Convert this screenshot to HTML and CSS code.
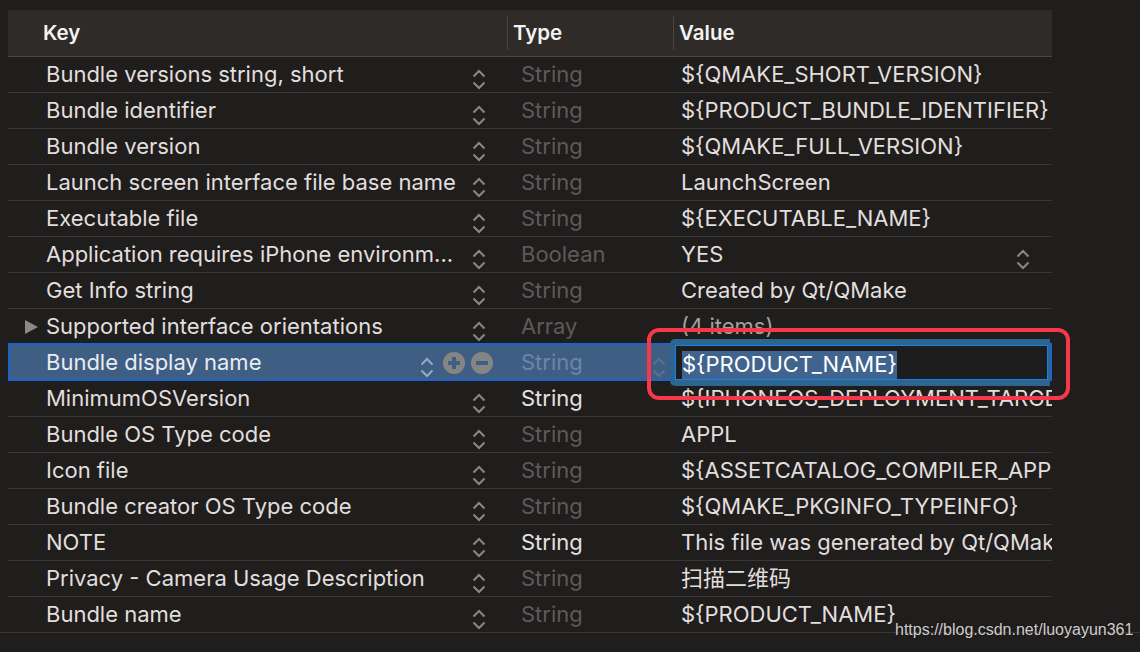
FILE: index.html
```html
<!DOCTYPE html>
<html lang="zh-CN">
<head>
  <meta charset="UTF-8">
  <title>Info.plist</title>
  <link rel="stylesheet" href="styles.css">
</head>
<body>
  <div class="plist">
    <div class="head">
      <div class="hcol hkey">Key</div>
      <div class="hcol htype">Type</div>
      <div class="hcol hvalue">Value</div>
    </div>

    <div class="row">
      <div class="key"><span class="disc"></span><span class="name">Bundle versions string, short</span><span class="stepper"></span></div>
      <div class="type">String</div>
      <div class="value">${QMAKE_SHORT_VERSION}</div>
    </div>
    <div class="row">
      <div class="key"><span class="disc"></span><span class="name">Bundle identifier</span><span class="stepper"></span></div>
      <div class="type">String</div>
      <div class="value">${PRODUCT_BUNDLE_IDENTIFIER}</div>
    </div>
    <div class="row">
      <div class="key"><span class="disc"></span><span class="name">Bundle version</span><span class="stepper"></span></div>
      <div class="type">String</div>
      <div class="value">${QMAKE_FULL_VERSION}</div>
    </div>
    <div class="row">
      <div class="key"><span class="disc"></span><span class="name">Launch screen interface file base name</span><span class="stepper"></span></div>
      <div class="type">String</div>
      <div class="value">LaunchScreen</div>
    </div>
    <div class="row">
      <div class="key"><span class="disc"></span><span class="name">Executable file</span><span class="stepper"></span></div>
      <div class="type">String</div>
      <div class="value">${EXECUTABLE_NAME}</div>
    </div>
    <div class="row">
      <div class="key"><span class="disc"></span><span class="name">Application requires iPhone environm...</span><span class="stepper"></span></div>
      <div class="type">Boolean</div>
      <div class="value value-pop"><span class="vtext">YES</span><span class="stepper"></span></div>
    </div>
    <div class="row">
      <div class="key"><span class="disc"></span><span class="name">Get Info string</span><span class="stepper"></span></div>
      <div class="type">String</div>
      <div class="value">Created by Qt/QMake</div>
    </div>
    <div class="row">
      <div class="key"><span class="disc open"></span><span class="name">Supported interface orientations</span><span class="stepper"></span></div>
      <div class="type">Array</div>
      <div class="value muted">(4 items)</div>
    </div>
    <div class="row selected">
      <div class="key"><span class="disc"></span><span class="name">Bundle display name</span><span class="stepper"></span><span class="circle plus"></span><span class="circle minus"></span></div>
      <div class="type"><span class="tname">String</span><span class="stepper faint"></span></div>
      <div class="value">
        <div class="ring"><div class="field"><span class="sel">${PRODUCT_NAME}</span></div></div>
      </div>
    </div>
    <div class="row">
      <div class="key"><span class="disc"></span><span class="name">MinimumOSVersion</span><span class="stepper"></span></div>
      <div class="type bright">String</div>
      <div class="value">${IPHONEOS_DEPLOYMENT_TARGET}</div>
    </div>
    <div class="row">
      <div class="key"><span class="disc"></span><span class="name">Bundle OS Type code</span><span class="stepper"></span></div>
      <div class="type">String</div>
      <div class="value">APPL</div>
    </div>
    <div class="row">
      <div class="key"><span class="disc"></span><span class="name">Icon file</span><span class="stepper"></span></div>
      <div class="type">String</div>
      <div class="value">${ASSETCATALOG_COMPILER_APPICON_NAME}</div>
    </div>
    <div class="row">
      <div class="key"><span class="disc"></span><span class="name">Bundle creator OS Type code</span><span class="stepper"></span></div>
      <div class="type">String</div>
      <div class="value">${QMAKE_PKGINFO_TYPEINFO}</div>
    </div>
    <div class="row">
      <div class="key"><span class="disc"></span><span class="name">NOTE</span><span class="stepper"></span></div>
      <div class="type bright">String</div>
      <div class="value">This file was generated by Qt/QMake.</div>
    </div>
    <div class="row">
      <div class="key"><span class="disc"></span><span class="name">Privacy - Camera Usage Description</span><span class="stepper"></span></div>
      <div class="type">String</div>
      <div class="value">扫描二维码</div>
    </div>
    <div class="row last">
      <div class="key"><span class="disc"></span><span class="name">Bundle name</span><span class="stepper"></span></div>
      <div class="type">String</div>
      <div class="value">${PRODUCT_NAME}</div>
    </div>
  </div>
  <div class="rule"></div>

  <div class="callout"></div>
  <div class="mark">https://blog.csdn.net/luoyayun361</div>
</body>
</html>
```

FILE: styles.css
```css
body {
  margin: 0;
  padding: 0;
  background: #201d1d;
  color: #e1dfde;
  font-family: Inter, "Noto Sans CJK SC", sans-serif;
  font-size: 22px;
  width: 1140px;
  height: 652px;
  overflow: hidden;
  position: relative;
}

.plist {
  margin: 10px 0 0 8px;
  width: 1044px;
}

.head {
  display: grid;
  grid-template-columns: 499px 166px 1fr;
  align-items: center;
  height: 46px;
  background: #2f2b29;
  border-bottom: 1px solid #4b4745;
}

.hcol {
  height: 34px;
  line-height: 34px;
  font-size: 20.5px;
  font-weight: 600;
  color: #f4f3f2;
}

.hkey {
  padding-left: 35px;
}

.htype, .hvalue {
  border-left: 1px solid #4a4644;
  padding-left: 5px;
}

.row {
  display: grid;
  grid-template-columns: 499px 166px 1fr;
  align-items: center;
  height: 35px;
  line-height: 33px;
  border-bottom: 1px solid #3a3636;
}

.row.last {
  border-bottom: none;
}

.key {
  display: flex;
  align-items: center;
  padding-left: 17px;
  padding-right: 21px;
  min-width: 0;
}

.disc {
  width: 21px;
  flex: none;
}

.disc.open::before {
  content: "";
  display: block;
  width: 0;
  height: 0;
  border-top: 7px solid transparent;
  border-bottom: 7px solid transparent;
  border-left: 13px solid #8c8988;
}

.name {
  flex: 1;
  min-width: 0;
  white-space: nowrap;
  overflow: hidden;
}

.stepper {
  flex: none;
  width: 14px;
  height: 22px;
  margin-top: 9px;
  margin-left: 6px;
  background: no-repeat center / 14px 22px url("data:image/svg+xml,%3Csvg xmlns='http://www.w3.org/2000/svg' width='14' height='22' viewBox='0 0 14 22'%3E%3Cpath d='M1.5 8.5 7 3l5.5 5.5M1.5 14.5 7 20l5.5-5.5' fill='none' stroke='%238a8786' stroke-width='2'/%3E%3C/svg%3E");
}

.type {
  padding-left: 14px;
  color: #5e5a59;
}

.type.bright {
  color: #e4e2e1;
}

.value {
  padding-left: 8px;
  white-space: nowrap;
  overflow: hidden;
}

.value.muted {
  color: #a3a09f;
}

.value-pop {
  display: flex;
  align-items: center;
  padding-right: 22px;
}

.vtext {
  flex: 1;
}

/* selected row */
.row.selected {
  height: 38px;
  margin-top: -2px;
  box-sizing: border-box;
  border: 2px solid #1e63c9;
  background: #3f5e84;
  color: #e8ecf1;
}

.row.selected .key {
  padding-left: 15px;
  padding-right: 16px;
}

.selected .stepper {
  margin-left: 0;
  background-image: url("data:image/svg+xml,%3Csvg xmlns='http://www.w3.org/2000/svg' width='14' height='22' viewBox='0 0 14 22'%3E%3Cpath d='M1.5 8.5 7 3l5.5 5.5M1.5 14.5 7 20l5.5-5.5' fill='none' stroke='%2397aac2' stroke-width='2'/%3E%3C/svg%3E");
}

.selected .stepper.faint {
  background-image: url("data:image/svg+xml,%3Csvg xmlns='http://www.w3.org/2000/svg' width='14' height='22' viewBox='0 0 14 22'%3E%3Cpath d='M1.5 8.5 7 3l5.5 5.5M1.5 14.5 7 20l5.5-5.5' fill='none' stroke='%23587391' stroke-width='2'/%3E%3C/svg%3E");
}

.circle {
  flex: none;
  width: 22px;
  height: 22px;
  border-radius: 50%;
  background: #858585;
  margin-left: 9px;
  margin-top: 1px;
  position: relative;
}

.circle.minus {
  margin-left: 6px;
}

.circle::before, .plus::after {
  content: "";
  position: absolute;
  left: 5px;
  top: 9px;
  width: 12px;
  height: 4px;
  background: #3f5e84;
}

.plus::after {
  left: 9px;
  top: 5px;
  width: 4px;
  height: 12px;
}

.row.selected .type {
  display: flex;
  align-items: center;
  padding-left: 12px;
  padding-right: 9px;
  color: #6c86a6;
}

.tname {
  flex: 1;
}

.row.selected .value {
  padding-left: 0;
  overflow: visible;
}

.ring {
  margin: -6px 0 -6px -5px;
  padding: 6px 0 6px 5px;
  background: #2b6590;
  border-radius: 5px 0 0 5px;
}

.field {
  height: 35px;
  margin-right: 2px;
  box-sizing: border-box;
  border: 1px solid #1a7fe4;
  background: #1e1d1d;
  padding: 2px 0 0 6px;
  color: #ffffff;
}

.sel {
  display: inline-block;
  height: 28px;
  line-height: 27px;
  background: #40648d;
}

.rule {
  height: 1px;
  background: #3a3636;
}

.callout {
  position: absolute;
  left: 647px;
  top: 328px;
  width: 415px;
  height: 64px;
  border: 4px solid #f7384b;
  border-radius: 12px;
}

.mark {
  position: absolute;
  left: 895px;
  top: 621px;
  font-family: "Liberation Sans", Arial, sans-serif;
  font-size: 16px;
  color: #cfcdcc;
  text-shadow: 0 0 2px #1a1818;
}
```
